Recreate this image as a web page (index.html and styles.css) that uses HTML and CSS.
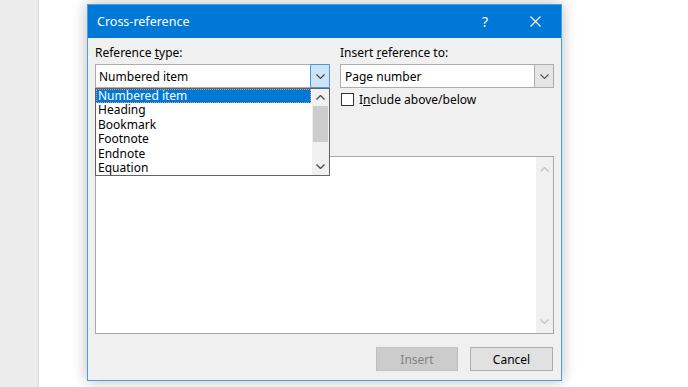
FILE: index.html
```html
<!DOCTYPE html>
<html lang="en">
<head>
    <meta charset="UTF-8">
    <title>Cross-reference</title>
    <link rel="stylesheet" href="styles.css">
</head>
<body>
    <div class="desktop">
        <div class="sidebar"></div>
        <div class="canvas">
            <div class="dialog">
                <div class="titlebar">
                    <span class="title">Cross-reference</span>
                    <span class="cap-btn help">?</span>
                    <span class="cap-btn close">
                        <svg width="11" height="11" viewBox="0 0 11 11"><path d="M0.5 0.5 L10.5 10.5 M10.5 0.5 L0.5 10.5" stroke="#fff" stroke-width="1.1" fill="none"/></svg>
                    </span>
                </div>
                <div class="dialog-body">
                    <div class="fields">
                        <div class="field field-left">
                            <div class="label">Reference <u>t</u>ype:</div>
                            <div class="combo combo-open">
                                <span class="combo-text">Numbered item</span>
                                <span class="combo-btn">
                                    <svg width="9" height="5" viewBox="0 0 9 5"><path d="M0.5 0.5 L4.5 4.5 L8.5 0.5" stroke="#444" stroke-width="1.1" fill="none"/></svg>
                                </span>
                                <div class="dropdown">
                                    <div class="items">
                                        <div class="item selected">Numbered item</div>
                                        <div class="item">Heading</div>
                                        <div class="item">Bookmark</div>
                                        <div class="item">Footnote</div>
                                        <div class="item">Endnote</div>
                                        <div class="item">Equation</div>
                                    </div>
                                    <div class="scrollbar">
                                        <span class="arrow">
                                            <svg width="9" height="5" viewBox="0 0 9 5"><path d="M0.5 4.5 L4.5 0.5 L8.5 4.5" stroke="#505050" stroke-width="1.4" fill="none"/></svg>
                                        </span>
                                        <span class="thumb"></span>
                                        <span class="track"></span>
                                        <span class="arrow">
                                            <svg width="9" height="5" viewBox="0 0 9 5"><path d="M0.5 0.5 L4.5 4.5 L8.5 0.5" stroke="#505050" stroke-width="1.4" fill="none"/></svg>
                                        </span>
                                    </div>
                                </div>
                            </div>
                        </div>
                        <div class="field field-right">
                            <div class="label">Insert <u>r</u>eference to:</div>
                            <div class="combo">
                                <span class="combo-text">Page number</span>
                                <span class="combo-btn">
                                    <svg width="9" height="5" viewBox="0 0 9 5"><path d="M0.5 0.5 L4.5 4.5 L8.5 0.5" stroke="#555" stroke-width="1.1" fill="none"/></svg>
                                </span>
                            </div>
                            <div class="check">
                                <span class="box"></span>
                                <span>I<u>n</u>clude above/below</span>
                            </div>
                        </div>
                    </div>

                    <div class="listbox">
                        <div class="list-area"></div>
                        <div class="list-scroll">
                            <svg width="9" height="5" viewBox="0 0 9 5"><path d="M0.5 4.5 L4.5 0.5 L8.5 4.5" stroke="#c2c2c2" stroke-width="1.3" fill="none"/></svg>
                            <svg width="9" height="5" viewBox="0 0 9 5"><path d="M0.5 0.5 L4.5 4.5 L8.5 0.5" stroke="#c2c2c2" stroke-width="1.3" fill="none"/></svg>
                        </div>
                    </div>

                    <div class="buttons">
                        <button class="btn btn-disabled">Insert</button>
                        <button class="btn btn-cancel">Cancel</button>
                    </div>
                </div>
            </div>
        </div>
    </div>
</body>
</html>
```

FILE: styles.css
```css
body {
    margin: 0;
    padding: 0;
    background-color: #fff;
    font-family: "Noto Sans", "Open Sans", sans-serif;
    font-size: 12px;
    color: #000;
    overflow: hidden;
}

.desktop {
    display: flex;
    height: 387px;
}

.sidebar {
    width: 38px;
    background-color: #ececec;
    border-right: 1px solid #d6d6d6;
}

.canvas {
    flex: 1;
    padding: 4px 0 0 48px;
}

/* dialog window */
.dialog {
    box-sizing: border-box;
    width: 475px;
    height: 377px;
    border: 1px solid #4a9fe4;
    background-color: #f0f0f0;
    box-shadow: 0 0 14px rgba(0, 0, 0, 0.28);
    display: flex;
    flex-direction: column;
}

.titlebar {
    height: 33px;
    background-color: #0078d7;
    display: flex;
    align-items: center;
    color: #fff;
    padding-right: 3px;
}

.title {
    flex: 1;
    padding-left: 9px;
    font-size: 12.5px;
}

.cap-btn {
    width: 46px;
    height: 33px;
    display: flex;
    align-items: center;
    justify-content: center;
}

.help {
    font-size: 14px;
    margin-right: 4px;
}

.dialog-body {
    padding: 7px 7px 9px 7px;
}

.fields {
    display: flex;
    gap: 10px;
}

.field-left {
    width: 235px;
}

.field-right {
    width: 214px;
}

.label {
    line-height: 16px;
    height: 16px;
}

/* combo boxes */
.combo {
    position: relative;
    box-sizing: border-box;
    height: 24px;
    margin-top: 3px;
    border: 1px solid #adadad;
    background-color: #fff;
    display: flex;
    align-items: center;
}

.combo-text {
    flex: 1;
    padding-left: 4px;
}

.field-left .combo-text {
    padding-left: 3px;
}

.combo-btn {
    box-sizing: border-box;
    width: 19px;
    height: 22px;
    background-color: #e5e5e5;
    border-left: 1px solid #adadad;
    display: flex;
    align-items: center;
    justify-content: center;
}

.combo-open .combo-btn {
    width: 20px;
    height: 24px;
    margin: -1px -1px -1px 0;
    background-color: #cce4f7;
    border: 1px solid #4f97dd;
}

.dropdown {
    position: absolute;
    top: 23px;
    left: -1px;
    box-sizing: border-box;
    width: 235px;
    height: 88px;
    border: 1px solid #646464;
    background-color: #fff;
    display: flex;
    z-index: 2;
}

.items {
    flex: 1;
}

.item {
    height: 14.4px;
    line-height: 14.4px;
    padding-left: 2px;
    white-space: nowrap;
}

.item.selected {
    background-color: #0078d7;
    color: #fff;
    outline: 1px dotted #d99a55;
    outline-offset: -1px;
}

.scrollbar {
    width: 17px;
    background-color: #f0f0f0;
    display: flex;
    flex-direction: column;
    margin-left: 1px;
}

.scrollbar .arrow {
    height: 17px;
    display: flex;
    align-items: center;
    justify-content: center;
}

.scrollbar .thumb {
    height: 36px;
    margin: 0 1px;
    background-color: #cdcdcd;
}

.scrollbar .track {
    flex: 1;
}

/* checkbox */
.check {
    display: flex;
    align-items: center;
    gap: 5px;
    height: 15px;
    margin-top: 4px;
    margin-left: 1px;
}

.check .box {
    box-sizing: border-box;
    width: 13px;
    height: 13px;
    border: 1px solid #333;
    background-color: #fff;
}

/* big list */
.listbox {
    box-sizing: border-box;
    height: 178px;
    margin-top: 49px;
    border: 1px solid #a9a9a9;
    background-color: #fff;
    display: flex;
}

.list-area {
    flex: 1;
}

.list-scroll {
    width: 17px;
    background-color: #f0f0f0;
    display: flex;
    flex-direction: column;
    justify-content: space-between;
    align-items: center;
    padding: 10px 0 9px 0;
}

.list-scroll svg {
    display: block;
}

/* buttons */
.buttons {
    display: flex;
    justify-content: flex-end;
    gap: 12px;
    margin-top: 13px;
    padding-right: 1px;
}

.btn {
    box-sizing: border-box;
    height: 24px;
    font-family: "Noto Sans", "Open Sans", sans-serif;
    font-size: 12px;
    padding: 0;
}

.btn-disabled {
    width: 82px;
    background-color: #cccccc;
    border: 1px solid #bfbfbf;
    color: #838383;
}

.btn-cancel {
    width: 83px;
    background-color: #e1e1e1;
    border: 1px solid #adadad;
    color: #000;
}
```
